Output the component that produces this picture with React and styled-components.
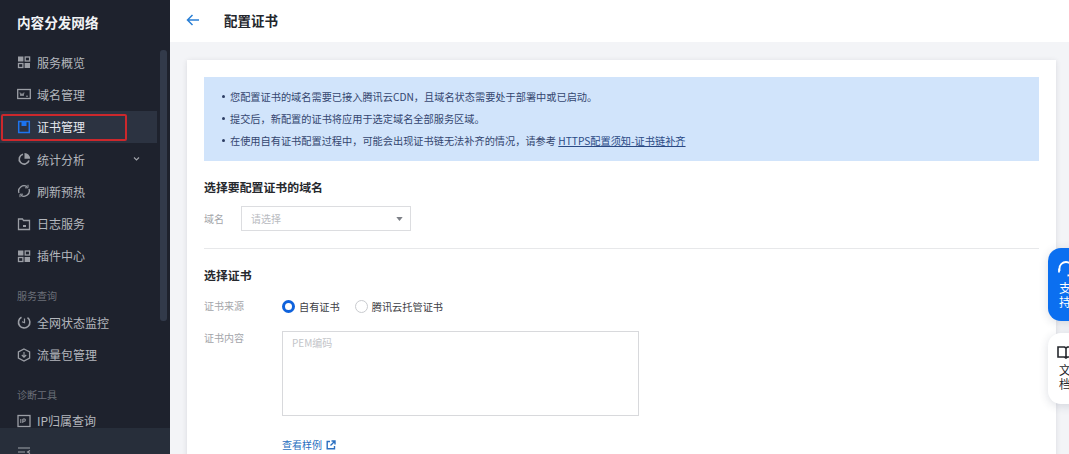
import React from "react";
import styled, { createGlobalStyle } from "styled-components";

const Global = createGlobalStyle`
  html, body { margin: 0; padding: 0; height: 454px; overflow: hidden; background: #f3f4f7; }
  #root { height: 454px; }
  * { box-sizing: border-box; }
  body { font-family: "Noto Sans CJK SC", "Liberation Sans", sans-serif; }
`;

const Page = styled.div`
  position: relative;
  display: flex;
  width: 1069px;
  height: 454px;
  overflow: hidden;
`;
const Sidebar = styled.aside`
  position: relative;
  flex: 0 0 170px;
  height: 454px;
  background: #1e222d;
  overflow: hidden;
`;
const Brand = styled.div`
  height: 46px;
  padding-left: 17px;
  line-height: 44px;
  font-size: 13.6px;
  font-weight: 700;
  color: #f2f3f5;
`;
const NavList = styled.nav`
  display: flex;
  flex-direction: column;
  width: 157px;
`;
const NavItem = styled.div`
  position: relative;
  display: flex;
  align-items: center;
  gap: 6px;
  height: 32.3px;
  padding-left: 17px;
  font-size: 12px;
  color: ${(p) => (p.$active ? "#e6e9ef" : "#b4b7bd")};
  background: ${(p) => (p.$active ? "#2c3341" : "transparent")};
  svg { flex: 0 0 14px; }
`;
const Caret = styled.svg`
  position: absolute;
  left: 133px;
  top: 13px;
`;
const SectionLabel = styled.div`
  height: 34px;
  padding-left: 17px;
  padding-top: 17px;
  font-size: 10px;
  line-height: 14px;
  color: #6c7079;
`;
const RedFrame = styled.div`
  position: absolute;
  left: 1px;
  top: 3px;
  width: 126px;
  height: 27px;
  border: 2px solid #cc282c;
  border-radius: 2px;
`;
const ScrollThumb = styled.div`
  position: absolute;
  left: 160px;
  top: 50px;
  width: 7px;
  height: 271px;
  border-radius: 3px;
  background: #323a4a;
`;
const Footer = styled.div`
  position: absolute;
  left: 0;
  right: 0;
  bottom: 0;
  height: 26px;
  padding: 19px 0 0 18px;
  background: #272e3a;
`;
const Main = styled.main`
  flex: 1;
  min-width: 0;
  display: flex;
  flex-direction: column;
`;
const Header = styled.header`
  flex: 0 0 42px;
  display: flex;
  align-items: center;
  padding: 0 0 2px 186px;
  margin-left: -170px;
  background: #fff;
`;
const PageTitle = styled.h1`
  margin: 0 0 0 24px;
  font-size: 13.5px;
  font-weight: 700;
  color: #23262c;
`;
const Content = styled.div`
  flex: 1;
  padding: 18px 13px 0 17px;
`;
const Card = styled.section`
  height: 420px;
  padding: 17px 17px 0;
  background: #fff;
  box-shadow: 0 1px 5px rgba(54, 58, 80, 0.14);
`;
const Notice = styled.ul`
  height: 84px;
  margin: 0;
  padding: 9px 0 0 26px;
  list-style: none;
  background: #d1e4fb;
`;
const NoticeItem = styled.li`
  position: relative;
  height: 22px;
  line-height: 22px;
  font-size: 10.2px;
  color: #34466f;
  white-space: nowrap;
  &::before {
    content: "";
    position: absolute;
    left: -8px;
    top: 9px;
    width: 3px;
    height: 3px;
    border-radius: 50%;
    background: #2c3d63;
  }
`;
const NoticeLink = styled.span`
  color: #2a4a85;
  text-decoration: underline;
`;
const SectionTitle = styled.h2`
  margin: 17px 0 0;
  height: 17px;
  line-height: 17px;
  font-size: 11.9px;
  font-weight: 700;
  color: #26282d;
`;
const DomainRow = styled.div`
  display: flex;
  align-items: center;
  margin-top: 11px;
`;
const FieldLabel = styled.label`
  flex: 0 0 ${(p) => p.$w}px;
  font-size: 10px;
  color: #a3a5aa;
  line-height: 14px;
`;
const SelectBox = styled.div`
  display: flex;
  align-items: center;
  justify-content: space-between;
  width: 170px;
  height: 25px;
  padding: 0 7px 0 9px;
  border: 1px solid #dcdde0;
  font-size: 10px;
  color: #b9bbbf;
`;
const Divider = styled.hr`
  height: 1px;
  margin: 17px 0 0;
  border: 0;
  background: #e7e8ea;
`;
const RadioRow = styled.div`
  display: flex;
  align-items: center;
  margin-top: 15px;
  height: 16px;
`;
const RadioOption = styled.div`
  display: flex;
  align-items: center;
  gap: 4px;
  margin-right: 15px;
  font-size: 10.2px;
  color: #3d4045;
`;
const RadioDot = styled.span`
  width: 13px;
  height: 13px;
  border-radius: 50%;
  background: #fff;
  border: ${(p) => (p.$on ? "3.5px solid #0f62dc" : "1px solid #c9cbcf")};
`;
const AreaRow = styled.div`
  display: flex;
  margin-top: 17px;
`;
const CertArea = styled.div`
  width: 357px;
  height: 85px;
  padding: 4px 9px;
  border: 1px solid #d8d9dc;
  font-size: 10px;
  line-height: 14px;
  color: #c3c5c9;
`;
const SampleLink = styled.div`
  display: flex;
  align-items: center;
  gap: 4px;
  margin: 22px 0 0 78px;
  font-size: 10px;
  line-height: 14px;
  color: #2a6fc0;
`;
const FloatBtn = styled.div`
  position: absolute;
  left: 1048px;
  top: ${(p) => p.$y}px;
  width: 40px;
  height: ${(p) => p.$h}px;
  padding: ${(p) => (p.$blue ? 13 : 12)}px 0 0 11px;
  border-radius: 13px 0 0 13px;
  background: ${(p) => (p.$blue ? "#0b6ff0" : "#fff")};
  color: ${(p) => (p.$blue ? "#fff" : "#26282d")};
  box-shadow: 0 2px 10px rgba(40, 50, 80, 0.16);
  font-size: 12px;
  line-height: 14px;
  svg { display: block; margin: 0 0 ${(p) => (p.$blue ? 4 : 2)}px -2px; }
`;

const stroke = { fill: "none", stroke: "currentColor", strokeWidth: 1.3 };
const I = ({ children, c }) => (
  <svg width="14" height="14" viewBox="0 0 14 14" style={{ color: c || "#9b9ea5" }}>{children}</svg>
);
const GridIcon = () => (
  <I>
    <rect x="1" y="1.5" width="5.4" height="5" fill="currentColor" />
    <rect x="8.2" y="2" width="4.4" height="4" {...stroke} />
    <rect x="1.5" y="8.5" width="4.4" height="4" {...stroke} />
    <rect x="7.6" y="8" width="5.4" height="5" fill="currentColor" />
  </I>
);
const WwwIcon = () => (
  <I>
    <rect x="0.7" y="2.5" width="12.6" height="9" {...stroke} />
    <path d="M3 5.5l1 3.5 1-2.5 1 2.5 1-3.5M9 9.2h2" fill="none" stroke="currentColor" strokeWidth="0.9" />
  </I>
);
const CertIcon = () => (
  <I c="#1d74ee">
    <rect x="1.7" y="1.5" width="10.6" height="11" fill="none" stroke="currentColor" strokeWidth="1.5" />
    <rect x="4.5" y="1.5" width="5" height="4.5" fill="currentColor" />
  </I>
);
const PieIcon = () => (
  <I>
    <path d="M6 2.2A5 5 0 1 0 12 8.5" {...stroke} strokeWidth="1.6" />
    <path d="M7.5 1A5.6 5.6 0 0 1 13.2 6.8H7.5Z" fill="currentColor" />
  </I>
);
const RefreshIcon = () => (
  <I>
    <path d="M2 9A5.4 5.4 0 0 1 10 2.6M12 5A5.4 5.4 0 0 1 4 11.4" {...stroke} />
    <path d="M11 .8v3H8M3 13.2v-3h3" fill="none" stroke="currentColor" strokeWidth="1" />
  </I>
);
const FolderIcon = () => (
  <I>
    <path d="M1.5 2h4l1 1.5h6v9h-11Z" {...stroke} />
    <rect x="6" y="8" width="3" height="2" fill="currentColor" />
  </I>
);
const MonitorIcon = () => (
  <I>
    <path d="M4.5 2.2A5.7 5.7 0 1 0 10.5 2.6" {...stroke} strokeWidth="1.6" />
    <path d="M7.5 3.5v4.2L5 6.8" fill="none" stroke="currentColor" strokeWidth="1.2" />
  </I>
);
const PackIcon = () => (
  <I>
    <path d="M7 1l5.6 3v6L7 13l-5.6-3V4Z" {...stroke} />
    <path d="M7 4v5M4.8 7L7 9.2 9.2 7" fill="none" stroke="currentColor" strokeWidth="1.1" />
  </I>
);
const IpIcon = () => (
  <I>
    <rect x="1" y="1.5" width="12" height="11" {...stroke} />
    <path d="M3.8 5v4M5.8 9V5h2.4v2.2H5.8" fill="none" stroke="currentColor" strokeWidth="1" />
  </I>
);

const top = [
  [GridIcon, "服务概览"],
  [WwwIcon, "域名管理"],
  [CertIcon, "证书管理", true],
  [PieIcon, "统计分析", false, true],
  [RefreshIcon, "刷新预热"],
  [FolderIcon, "日志服务"],
  [GridIcon, "插件中心"],
];

const COMMA = "\uFF0C";
const notices = [
  `您配置证书的域名需要已接入腾讯云CDN${COMMA}且域名状态需要处于部署中或已启动。`,
  `提交后${COMMA}新配置的证书将应用于选定域名全部服务区域。`,
  `在使用自有证书配置过程中${COMMA}可能会出现证书链无法补齐的情况${COMMA}请参考 `,
];

export default function App() {
  return (
    <Page>
      <Global />
      <Sidebar>
        <Brand>内容分发网络</Brand>
        <NavList>
          {top.map(([Icon, label, active, caret]) => (
            <NavItem key={label} $active={active}>
              {active && <RedFrame />}
              <Icon />
              {label}
              {caret && (
                <Caret width="7" height="6" viewBox="0 0 7 6">
                  <path d="M1 1.5l2.5 2.5L6 1.5" fill="none" stroke="#a0a3a9" strokeWidth="1.1" />
                </Caret>
              )}
            </NavItem>
          ))}
          <SectionLabel>服务查询</SectionLabel>
          <NavItem><MonitorIcon />全网状态监控</NavItem>
          <NavItem><PackIcon />流量包管理</NavItem>
          <SectionLabel>诊断工具</SectionLabel>
          <NavItem><IpIcon />IP归属查询</NavItem>
        </NavList>
        <ScrollThumb />
        <Footer>
          <svg width="13" height="10" viewBox="0 0 13 10" style={{ display: "block" }}>
            <path d="M0 1h12M0 5h7M0 9h12M12 3.5L9.5 5 12 6.5" fill="none" stroke="#a0a3a9" strokeWidth="1.1" />
          </svg>
        </Footer>
      </Sidebar>
      <Main>
        <Header>
          <svg width="14" height="14" viewBox="0 0 14 14">
            <path d="M13 7H1.5M6.5 2L1.5 7l5 5" fill="none" stroke="#2a7fd5" strokeWidth="1.5" />
          </svg>
          <PageTitle>配置证书</PageTitle>
        </Header>
        <Content>
          <Card>
            <Notice>
              <NoticeItem>{notices[0]}</NoticeItem>
              <NoticeItem>{notices[1]}</NoticeItem>
              <NoticeItem>{notices[2]}<NoticeLink>HTTPS配置须知-证书链补齐</NoticeLink></NoticeItem>
            </Notice>
            <SectionTitle>选择要配置证书的域名</SectionTitle>
            <DomainRow>
              <FieldLabel $w={37}>域名</FieldLabel>
              <SelectBox>
                请选择
                <svg width="7" height="4" viewBox="0 0 8 5"><path d="M0 0h8L4 5Z" fill="#7d8087" /></svg>
              </SelectBox>
            </DomainRow>
            <Divider />
            <SectionTitle>选择证书</SectionTitle>
            <RadioRow>
              <FieldLabel $w={78}>证书来源</FieldLabel>
              <RadioOption><RadioDot $on />自有证书</RadioOption>
              <RadioOption><RadioDot />腾讯云托管证书</RadioOption>
            </RadioRow>
            <AreaRow>
              <FieldLabel $w={78}>证书内容</FieldLabel>
              <CertArea>PEM编码</CertArea>
            </AreaRow>
            <SampleLink>
              查看样例
              <svg width="10" height="10" viewBox="0 0 10 10">
                <path d="M4 1.5H1.2v7.3h7.3V6M5.5 1H9v3.5M9 1L4.5 5.5" fill="none" stroke="#2a6fc0" strokeWidth="1.4" />
              </svg>
            </SampleLink>
          </Card>
        </Content>
      </Main>
      <FloatBtn $blue $y={248} $h={73}>
        <svg width="18" height="16" viewBox="0 0 18 16">
          <path d="M2.5 10V7.5a6.5 6.5 0 0 1 13 0V10M2 7.5v4M16 7.5v4M15.5 11.5c0 2-2.5 3-5 3" fill="none" stroke="#fff" strokeWidth="1.8" />
        </svg>
        支<br />持
      </FloatBtn>
      <FloatBtn $y={333} $h={71}>
        <svg width="18" height="16" viewBox="0 0 18 16">
          <path d="M1 2h6.5l1.5 1 1.5-1H17v10h-6.5L9 13l-1.5-1H1ZM9 3v10" fill="none" stroke="#26282d" strokeWidth="1.6" />
        </svg>
        文<br />档
      </FloatBtn>
    </Page>
  );
}
